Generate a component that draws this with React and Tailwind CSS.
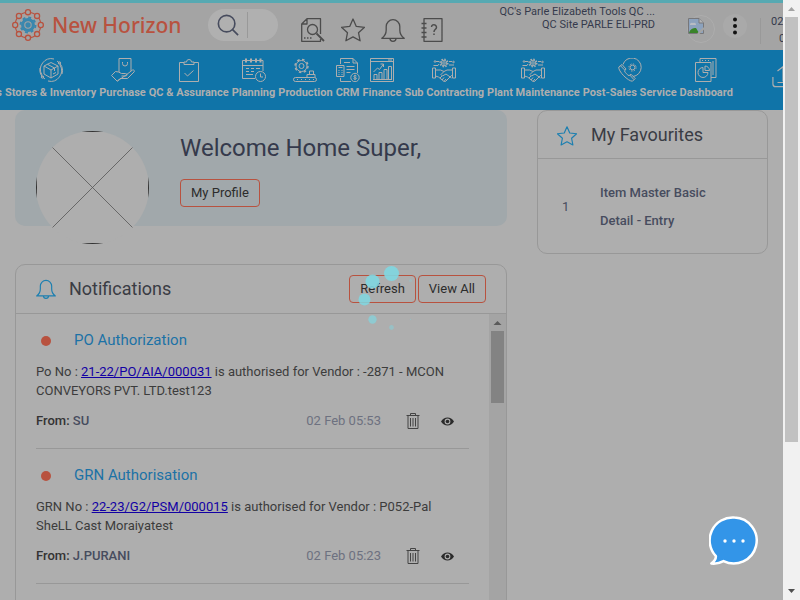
import React from "react";

function Icon({ size, box = 24, stroke = 1, className = "", children }) {
  return (
    <svg
      width={size}
      height={size}
      viewBox={`0 0 ${box} ${box}`}
      fill="none"
      stroke="currentColor"
      strokeWidth={stroke}
      strokeLinejoin="round"
      className={`shrink-0 ${className}`}
      aria-hidden="true"
    >
      {children}
    </svg>
  );
}

const STAR = "M12 1l3.3 7.4 8.2.9-6 5.4 1.6 8.1L12 18.9l-7.1 3.9 1.6-8.1-6-5.4 8.2-.9z";

function BellShape() {
  return (
    <>
      <path d="M.8 20.3c2.8-2 4.4-4.6 4.4-8.300V8.500a6.800 6.800 0 0 1 13.600 0V12c0 3.700 1.600 6.300 4.400 8.300z" />
      <path d="M9 20.500a3 2.800 0 0 0 6 0" />
    </>
  );
}

function LogoMark() {
  const nodes = [
    [15, 3], [23.500, 6.500], [27, 15], [23.500, 23.500],
    [15, 27], [6.500, 23.500], [3, 15], [6.500, 6.500],
  ];
  return (
    <svg width="32" height="32" viewBox="0 0 30 30" fill="none" className="shrink-0" aria-hidden="true">
      <circle cx="15" cy="15" r="12" stroke="#b8523f" strokeWidth="1" />
      {nodes.map(([x, y]) => (
        <circle key={`${x}-${y}`} cx={x} cy={y} r="2.400" fill="#a4a4a4" stroke="#b8523f" strokeWidth="1.200" />
      ))}
      <circle cx="15" cy="15" r="6.500" fill="#3a87ae" />
      <circle cx="15" cy="15" r="7" stroke="#3a87ae" strokeWidth="1.800" strokeDasharray="2.750 2.750" />
      <circle cx="15" cy="15" r="3" stroke="#a4a4a4" strokeWidth="1" />
    </svg>
  );
}

const gear = (cx, cy, r) => (
  <>
    <circle cx={cx} cy={cy} r={r} />
    <circle cx={cx} cy={cy} r={r / 2.2} />
    <circle cx={cx} cy={cy} r={r + 1} strokeDasharray={`${(r + 1) * 0.39} ${(r + 1) * 0.39}`} strokeWidth="1.400" />
  </>
);

const handshake = (
  <>
    {gear(12, 5, 2.8)}
    <path d="M4 3.500h3l1 1M1.500 7.500H6l1-1.500M22 7h-5M17 3.500h3" />
    <circle cx="3" cy="3.500" r=".8" />
    <circle cx="21.500" cy="4" r=".8" />
    <path d="M.5 10h3v10h-3zM20.500 10h3v10h-3zM3.500 12h5l3.500 1.500 3-1.500h5.500M3.500 18l3 1 5 4 2 .5 6-6 1-.5M12 13.500L9 16.500l1.500 1.500 3.500-2 5.500 4M8 20l2-2M10 22l2-2.500M12 23.500l2-2.500" />
  </>
);

const modules = [
  {
    label: "Stores & Inventory",
    art: (
      <>
        <path d="M3 17A10.800 10.800 0 0 1 15 1M21 7A10.800 10.800 0 0 1 9 23M18 3a11 11 0 0 1 5 13M6 21a11 11 0 0 1-5-11" />
        <circle cx="20.500" cy="5" r="1.200" />
        <circle cx="3.500" cy="19" r="1.200" />
        <path d="M12 4.500l7 3.500v8l-7 4-7-4V8zM5 8l7 4 7-4M12 12v8M8.500 6.300l7 3.700v3M14 16l3-1.500" />
      </>
    ),
  },
  {
    label: "Purchase",
    art: (
      <>
        <path d="M8 14V.5h12V13M11.500 4v1.500a2.500 2.500 0 0 0 5 0V4" />
        <path d="M.5 17.500l4-4 3 .5 3 1.500h4c2 0 2 2.500 0 2.500h-4M15 17l6.500-5c1.500-.5 2.500 1 1.500 2l-6.500 6.500H9l-2.500 2.500zM.5 17.500l6 6" />
      </>
    ),
  },
  {
    label: "QC & Assurance",
    art: (
      <path d="M7 4.500H2.500v19h19v-19H17M7 6.500V4h2.500a2.500 2.500 0 0 1 5 0H17v2.500zM7.500 15l3 3 6-5.500" />
    ),
  },
  {
    label: "Planning",
    art: (
      <>
        <path d="M13 20.500H.5v-18H21V13M.5 7.500H21M4 10.500h3M9 10.500h3M14 10.500h4M4 13.500h3M9 13.500h3M4 16.500h7" />
        <path d="M4 .5v4M9 .5v4M14 .5v4M18.500 .5v4" strokeWidth="2" />
        <circle cx="18.500" cy="18.500" r="5" />
        <path d="M18.500 15.500v3.500h2.500" />
      </>
    ),
  },
  {
    label: "Production",
    art: (
      <>
        {gear(8.5, 8, 5.5)}
        <rect x=".5" y="19.500" width="23" height="4" rx="2" />
        <path d="M14 19.500v-3h8v3M16.500 16.500V13h4v3.500M4 21.500h1M8 21.500h1M12 21.500h1M16 21.500h1M20 21.500h1" />
      </>
    ),
  },
  {
    label: "CRM",
    art: (
      <>
        <path d="M4.500 6V.5H17l4.500 4.500v10M17 .5V5h4.500M4.500 20v3.500H15M8 4.500h6M10.500 8.500h8M10.500 11.500h8M10.500 14.500h4" />
        <rect x=".5" y="7.500" width="7.500" height="11" />
        <path d="M2.500 9.500h4M2.500 12.500h1M5.500 12.500h1M2.500 14.500h1M5.500 14.500h1M2.500 16.500h1M5.500 16.500h1" />
        <circle cx="19" cy="19.500" r="4.200" />
        <path d="M20.500 18c-1-1-3-.5-2.500.8s2.500.5 2.500 1.500-2 1.200-3 .2M19 16.800v5.400" />
      </>
    ),
  },
  {
    label: "Finance",
    art: (
      <path d="M.5.500h23v23H.5zM.5 3.500h23M18 2h4M4 21.500v-5h3v5M9 21.500v-7h3v7M14 21.500v-10h3v10M18.500 21.500v-13h3v13M3 21.500h19M3.500 14l4-4 2 1.500 4-5.500M10.500 6h3v3" />
    ),
  },
  { label: "Sub Contracting", art: handshake },
  { label: "Plant Maintenance", art: handshake },
  {
    label: "Post-Sales Service",
    art: (
      <>
        <path d="M4 6.500L.8 9c-1 4 9.500 14.500 13.700 14.200l2.700-2.700-4.200-4.300-2 1.500c-1.500-.7-4-3.200-4.500-4.700L8 11z" />
        <path d="M2.500 7.800l4.200 4.200M11.800 17l4 4.500M5 6.500A9.300 9.300 0 1 1 15 18.500" />
        <circle cx="14.500" cy="9.500" r="2.400" />
        <circle cx="14.500" cy="9.500" r="3.600" strokeDasharray="1.400 1.430" />
      </>
    ),
  },
  {
    label: "Dashboard",
    art: (
      <>
        <path d="M1.500 4.500h15.500v19H1.500zM6 4.500v-4h16v19h-5M8 2.500h1M11 2.500h1M14 2.500h1M19 3v14" />
        <path d="M9 9.500a5 5 0 1 0 5 5H9z" />
        <path d="M11 8v4.500h4.500A4.500 4.500 0 0 0 11 8z" />
      </>
    ),
  },
];

const notifications = [
  {
    title: "PO Authorization",
    lead: "Po No : ",
    ref: "21-22/PO/AIA/000031",
    rest: " is authorised for Vendor : -2871 - MCON CONVEYORS PVT. LTD.test123",
    from: "SU",
    time: "02 Feb 05:53",
  },
  {
    title: "GRN Authorisation",
    lead: "GRN No : ",
    ref: "22-23/G2/PSM/000015",
    rest: " is authorised for Vendor : P052-Pal SheLL Cast Moraiyatest",
    from: "J.PURANI",
    time: "02 Feb 05:23",
  },
];

function Header() {
  return (
    <header className="flex h-[50px] shrink-0 items-start overflow-hidden border-t-[3px] border-[#57a9b2] bg-[#a4a4a4]">
      <a href="#home" className="ml-3 mt-[6px] flex items-center gap-2">
        <LogoMark />
        <span className="w-[148px] whitespace-nowrap font-['Noto_Sans',sans-serif] text-[21px] leading-8 font-medium text-[#b8523f]">
          New Horizon
        </span>
      </a>
      <div className="ml-2 mt-[6px] flex h-8 w-[70px] shrink-0 items-center rounded-full bg-[#b0b0b0] text-[#474c5e]">
        <button aria-label="Search" className="flex w-10 justify-center border-r border-[#999] py-[2px]">
          <Icon size={22} stroke={1.8}>
            <circle cx="10.500" cy="10.500" r="9" />
            <path d="M17 17l6 6" />
          </Icon>
        </button>
        <input aria-label="Search text" className="w-7 bg-transparent outline-none" />
      </div>
      <div className="ml-[23px] mt-[15px] flex shrink-0 gap-4 text-[#4c4c4c]">
        <button aria-label="Find document">
          <Icon size={24} stroke={1.3}>
            <path d="M19.500 16V.7H6L.7 6v17.300h18.800V21M6 .7V6H.7M3 20h1.500M6 20h1.500M9 20h1.500" />
            <circle cx="11.500" cy="11.500" r="5" />
            <path d="M15.500 15.500l7.500 7.500" strokeWidth="1.800" />
          </Icon>
        </button>
        <button aria-label="Favourites">
          <Icon size={24} stroke={1.3}><path d={STAR} /></Icon>
        </button>
        <button aria-label="Notifications">
          <Icon size={24} stroke={1.3}><BellShape /></Icon>
        </button>
        <button aria-label="Help">
          <Icon size={24} stroke={1.3}>
            <path d="M3 .7h18v22.600H3zM.5 5.500h5M.5 10h5M.5 14.500h5M.5 19h5" />
            <path d="M10.500 9a2.500 2.500 0 1 1 3.800 2.300c-1 .7-1.300 1.200-1.300 2.700M13 15.500v1.500" strokeWidth="1.500" />
          </Icon>
        </button>
      </div>
      <div className="ml-auto mt-[2px] shrink-0 text-right text-[11px] leading-[13px] text-[#353a4c]">
        <p>QC's Parle Elizabeth Tools QC ...</p>
        <p>QC Site PARLE ELI-PRD</p>
      </div>
      <span className="ml-8 mt-3 flex size-7 shrink-0 items-start rounded-full border border-[#adadad] pt-[2px]">
        <svg width="16" height="16" viewBox="0 0 16 16" role="img" aria-label="User">
          <path d="M.5.500h10.500l4.500 4.500v10.500H.5z" fill="#8ca2bd" stroke="#77777a" />
          <path d="M11 .5V5h4.500" fill="#b5b5b5" stroke="#77777a" />
          <path d="M2 7a2 2 0 0 1 3-2 2 2 0 0 1 3 2z" fill="#b8bcc4" />
          <path d="M1 15c1-4 4-5 7-5l3 5z" fill="#398329" />
          <path d="M10 16l6-6" stroke="#a4a4a4" strokeWidth="2" />
        </svg>
      </span>
      <button aria-label="More" className="ml-2 mt-[11px] flex size-6 shrink-0 items-center justify-center rounded-full bg-[#a9a9a9]">
        <svg width="4" height="18" viewBox="0 0 4 18" fill="#111" aria-hidden="true">
          <circle cx="2" cy="2.500" r="2" />
          <circle cx="2" cy="9" r="2" />
          <circle cx="2" cy="15.500" r="2" />
        </svg>
      </button>
      <div className="ml-[13px] mt-[15px] h-[26px] shrink-0 border-l border-[#999]" />
      <div className="ml-[10px] mt-[10px] flex w-3 shrink-0 flex-col overflow-hidden whitespace-nowrap text-[11px] leading-[17px] text-[#353a4c]">
        <span>02 Feb</span>
        <span className="pl-2">05:54</span>
      </div>
    </header>
  );
}

function ModuleNav() {
  return (
    <nav className="flex h-[60px] shrink-0 gap-[3px] overflow-hidden bg-[#1074a8] pt-2 text-[11px] leading-4 font-bold text-[#aeaeae]">
      <a href="#sales" className="flex w-[2px] shrink-0 items-start justify-end overflow-hidden pt-[27px]">Sales</a>
      {modules.map((m) => (
        <a key={m.label} href="#module" className="flex shrink-0 flex-col items-center gap-[3px] whitespace-nowrap">
          <Icon size={24}>{m.art}</Icon>
          {m.label}
        </a>
      ))}
      <button aria-label="Upload" className="ml-auto flex w-[11px] shrink-0 items-start overflow-hidden pt-2">
        <Icon size={22} stroke={1.3}>
          <path d="M1 12v7.500c0 2 1 3 3 3h16c2 0 3-1 3-3V12M12 17V1M6 5.500L12 .8l6 4.700M6 18h12" />
        </Icon>
      </button>
    </nav>
  );
}

function OutlineButton({ children }) {
  return (
    <button className="h-7 whitespace-nowrap rounded-[4px] border border-[#b8523f] px-[10px] text-[13px] leading-[26px] text-[#2c2c2c]">
      {children}
    </button>
  );
}

function Welcome() {
  return (
    <section className="flex h-[116px] items-start rounded-[10px] bg-[#a1a8ab] pl-[21px] pt-[21px]">
      <svg width="113" height="113" viewBox="0 0 113 113" className="shrink-0 overflow-hidden rounded-full bg-[#aeaeae]" role="img" aria-label="Profile">
        <rect x=".5" y=".5" width="112" height="112" fill="none" stroke="#333" />
        <path d="M0 0l113 113M113 0L0 113" stroke="#555" strokeWidth=".8" />
      </svg>
      <div className="ml-[31px] pt-px">
        <h1 className="mb-[15px] text-[24px] leading-8 text-[#353a4c]">Welcome Home Super,</h1>
        <OutlineButton>My Profile</OutlineButton>
      </div>
    </section>
  );
}

function NotificationItem({ item }) {
  return (
    <li className="border-b border-[#989898] pt-4 pb-[17px]">
      <div className="flex h-5 items-center">
        <span className="ml-[5px] mt-[2px] size-[10px] rounded-full bg-[#b8523f]" />
        <h3 className="ml-[23px] text-[15px] leading-5 text-[#1c72a6]">{item.title}</h3>
      </div>
      <p className="mt-3 text-[13px] leading-[19px] text-[#3c3c3c]">
        {item.lead}
        <a href="#document" className="text-[#1200a4] underline">{item.ref}</a>
        {item.rest}
      </p>
      <div className="mt-[11px] flex h-5 items-center text-[13px]">
        <p className="font-medium text-[#474c5e]">
          <span className="text-[#333]">From:</span> {item.from}
        </p>
        <time className="ml-auto text-[#6d7180]">{item.time}</time>
        <button aria-label="Delete" className="ml-6">
          <Icon size={16} box={16} className="text-[#444]">
            <path d="M1.500 2.500h13M5.500 2.500v-2h5v2M3 2.500v13h10v-13M5.500 5v8.500M8 5v8.500M10.500 5v8.500" />
          </Icon>
        </button>
        <button aria-label="View" className="mr-[15px] ml-5">
          <svg width="13" height="9" viewBox="0 0 13 9" aria-hidden="true">
            <path d="M0 4.500C3-.8 10-.8 13 4.500 10 9.800 3 9.800 0 4.500z" fill="#2b2b2b" />
            <circle cx="6.500" cy="4.500" r="2.900" fill="#aeaeae" />
            <circle cx="6.500" cy="4.500" r="1.800" fill="#2b2b2b" />
          </svg>
        </button>
      </div>
    </li>
  );
}

function Notifications() {
  return (
    <section className="mt-[38px] rounded-[10px] border border-[#989898]">
      <div className="flex h-[49px] items-center border-b border-[#989898] pr-5 pl-5">
        <Icon size={20} stroke={1.4} className="text-[#1c7fb0]"><BellShape /></Icon>
        <h2 className="ml-[13px] text-[18px] leading-6 text-[#3a3c44]">Notifications</h2>
        <div className="ml-auto flex gap-[2px]">
          <OutlineButton>Refresh</OutlineButton>
          <OutlineButton>View All</OutlineButton>
        </div>
      </div>
      <div className="flex h-[400px]">
        <ul className="min-w-0 flex-1 px-5">
          {notifications.map((n) => <NotificationItem key={n.ref} item={n} />)}
        </ul>
        <div className="flex w-[17px] flex-col items-center bg-[#a4a4a4]">
          <svg width="17" height="17" viewBox="0 0 17 17" fill="#5a5a5a" aria-hidden="true"><path d="M4.500 11l4-4 4 4z" /></svg>
          <div className="h-[72px] w-[13px] bg-[#838383]" />
        </div>
      </div>
    </section>
  );
}

function Favourites() {
  return (
    <section className="rounded-[10px] border border-[#989898]">
      <div className="flex h-12 items-center border-b border-[#989898] px-[19px]">
        <Icon size={20} stroke={1.4} className="mt-[2px] text-[#1c7fb0]"><path d={STAR} /></Icon>
        <h2 className="ml-[14px] text-[18px] leading-6 text-[#3a3c44]">My Favourites</h2>
      </div>
      <ol className="px-6 pt-5 pb-[18px]">
        <li className="flex items-center text-[13px] leading-7 font-medium text-[#474c5e]">
          <span className="w-[38px] shrink-0 font-normal">1</span>
          <a href="#item" className="max-w-[120px]">Item Master Basic Detail - Entry</a>
        </li>
      </ol>
    </section>
  );
}

const spinnerDots = [
  [27, 7, 7.5, 1], [8, 15, 7, 1], [0, 33, 6, 0.95], [8, 53, 4.2, 0.75],
  [27, 61, 2.4, 0.5], [46, 14, 1.6, 0.3], [46, 53, 0.7, 0.4],
];

export default function App() {
  return (
    <div className="relative flex h-screen overflow-hidden bg-[#aeaeae] font-[Roboto,sans-serif]">
      <div className="flex min-w-0 flex-1 flex-col overflow-hidden">
        <Header />
        <ModuleNav />
        <main className="flex min-h-0 flex-1 items-start overflow-hidden">
          <div className="w-2/3 px-[15px]">
            <Welcome />
            <Notifications />
          </div>
          <div className="w-1/3 px-[15px]">
            <Favourites />
          </div>
        </main>
      </div>

      <div className="flex w-[17px] shrink-0 flex-col items-center bg-[#f1f1f1]">
        <svg width="17" height="17" viewBox="0 0 17 17" fill="#a3a3a3" aria-hidden="true"><path d="M5 11l3.500-4 3.500 4z" /></svg>
        <div className="h-[425px] w-[13px] bg-[#c1c1c1]" />
        <svg width="17" height="17" viewBox="0 0 17 17" fill="#505050" className="mt-auto" aria-hidden="true"><path d="M5 6l3.500 4L12 6z" /></svg>
      </div>

      <svg width="72" height="80" viewBox="-8 -8 72 80" fill="#80d8e2" className="pointer-events-none absolute top-[258px] left-[356px] opacity-90" role="img" aria-label="Loading">
        {spinnerDots.map(([x, y, r, o]) => (
          <circle key={`${x}-${y}`} cx={x + 0.5} cy={y + 0.5} r={r} opacity={o} />
        ))}
      </svg>

      <button aria-label="Chat" className="absolute right-[41px] bottom-[33px]">
        <svg width="50" height="52" viewBox="0 0 50 52" aria-hidden="true">
          <path
            d="M25.500 2.500a23 23 0 1 1-11 43.600C11 48 6.500 49 2.300 48.500 5 46.500 7 44 6.900 41.200A23 23 0 0 1 25.500 2.500z"
            fill="#3395e8"
            stroke="#fff"
            strokeWidth="2.500"
            strokeLinejoin="round"
          />
          <g fill="#fff">
            <circle cx="16" cy="26" r="1.700" />
            <circle cx="25" cy="26" r="1.700" />
            <circle cx="34" cy="26" r="1.700" />
          </g>
        </svg>
      </button>
    </div>
  );
}
